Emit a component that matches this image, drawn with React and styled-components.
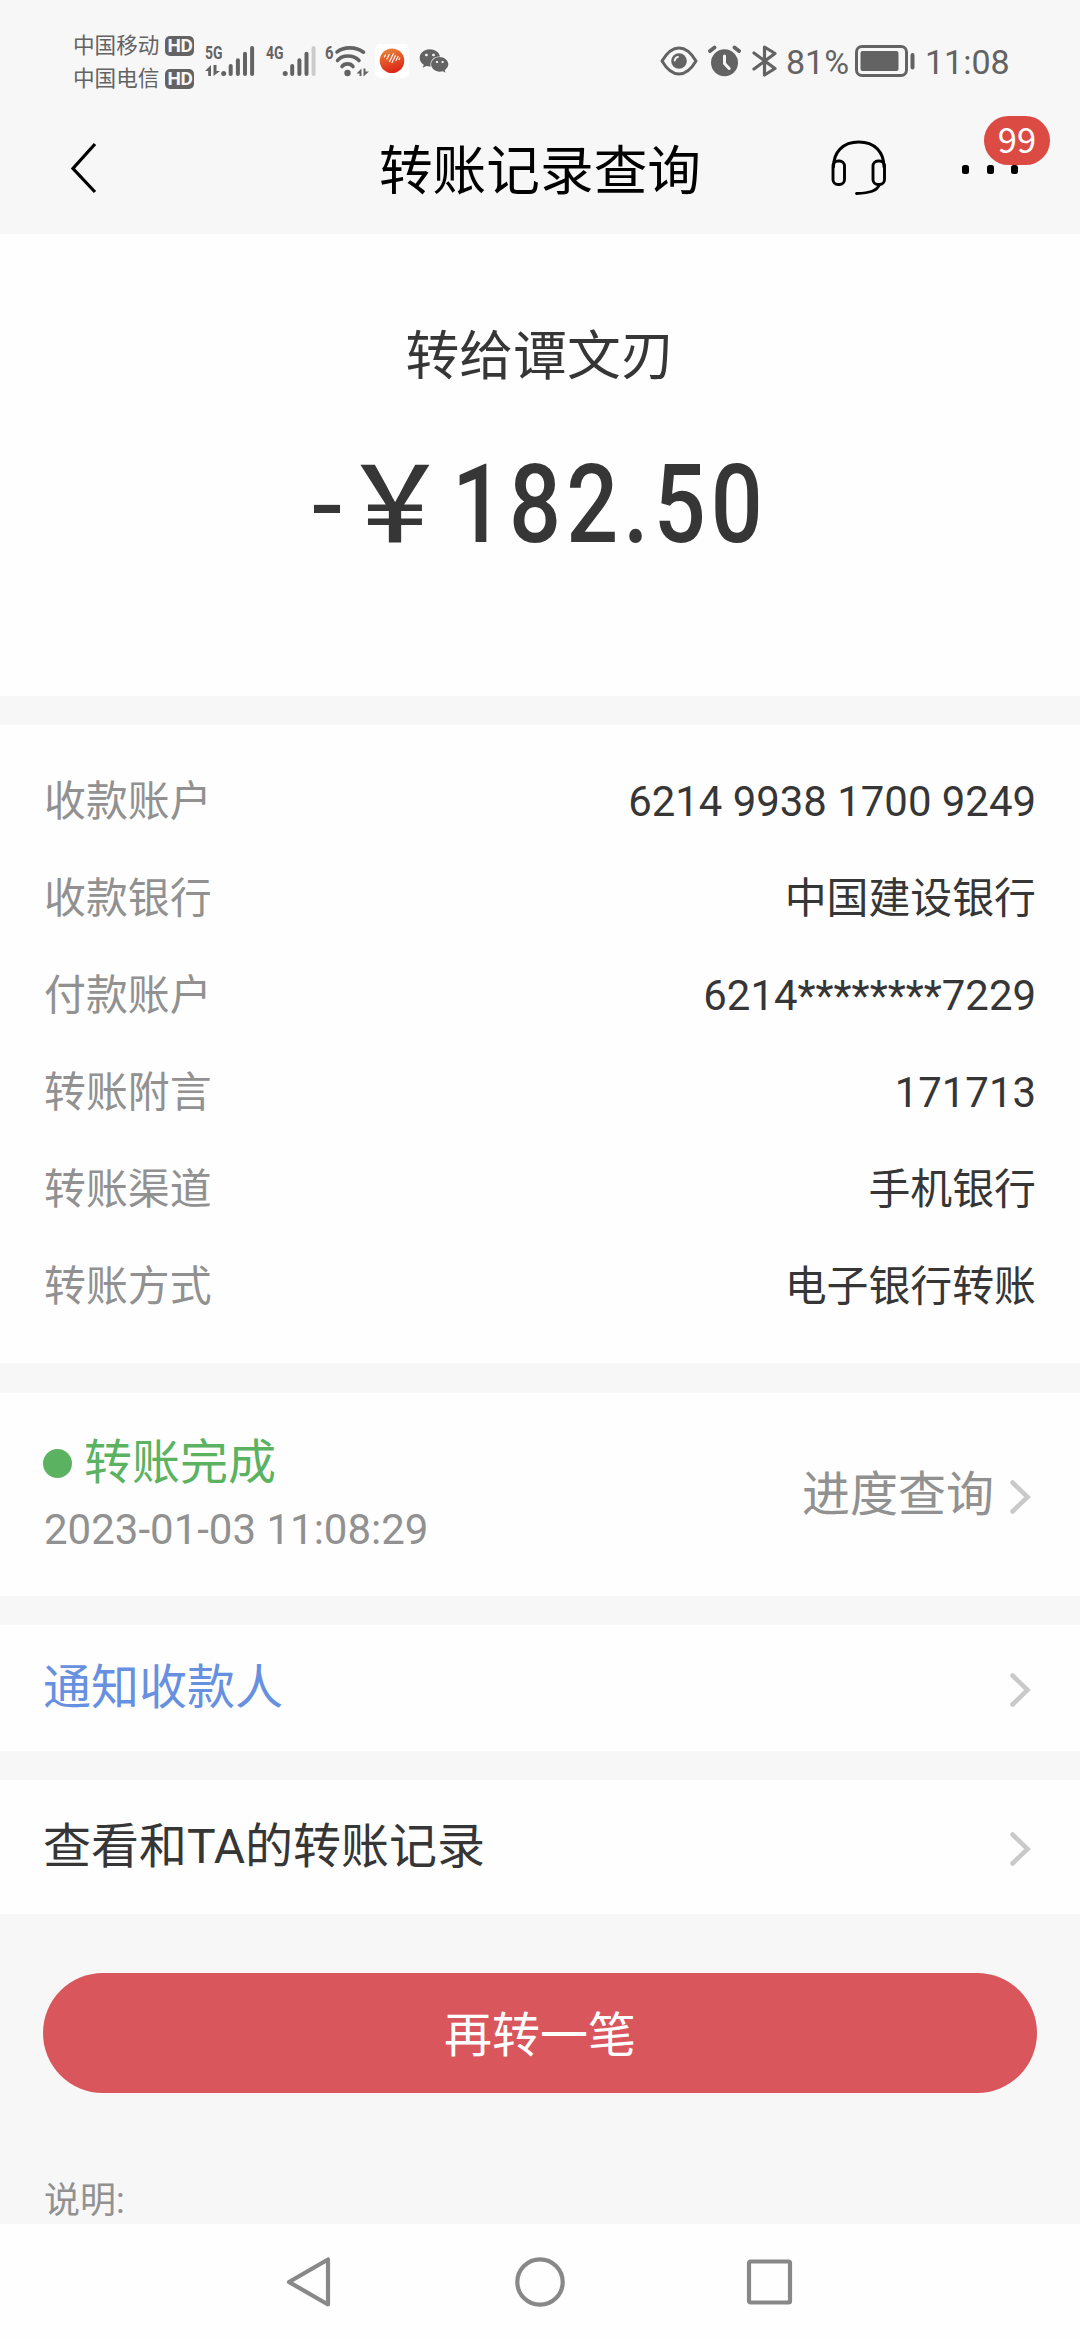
import React from 'react';
import styled, { createGlobalStyle } from 'styled-components';
import { FaWeixin } from 'react-icons/fa';

const GlobalStyle = createGlobalStyle`
  *, *::before, *::after { box-sizing: border-box; }
  html, body { margin: 0; padding: 0; background: #f7f7f7; }
  body { font-family: Roboto, 'Noto Sans CJK SC', sans-serif; color: #363636; }
  svg { display: block; flex: none; }
`;

const Screen = styled.div`
  width: 1080px;
  height: 2340px;
  display: flex;
  flex-direction: column;
  background: #f7f7f7;
  overflow: hidden;
`;

/* Status bar */
const StatusBar = styled.div`
  flex: none;
  height: 108px;
  padding: 29px 72px 0 73px;
  display: flex;
  align-items: flex-start;
  justify-content: space-between;
  color: #636363;
`;
const StatusGroup = styled.div`
  display: flex;
  align-items: flex-start;
`;
const Carriers = styled.div`
  width: 132px;
  display: flex;
  flex-direction: column;
`;
const Carrier = styled.div`
  height: 33px;
  display: flex;
  align-items: center;
  gap: 6px;
  font-size: 21.6px;
  line-height: 33px;
  white-space: nowrap;
`;
const HdTag = styled.span`
  width: 29px;
  height: 20px;
  border-radius: 5px;
  background: #636363;
  color: #f7f7f7;
  font-size: 19px;
  font-weight: 700;
  letter-spacing: -0.6px;
  line-height: 20.5px;
  text-align: center;
`;
const IconSlot = styled.div`
  margin-left: ${(p) => p.$left || 0}px;
  margin-top: ${(p) => p.$top || 0}px;
`;
const StatusText = styled.span`
  margin-left: ${(p) => p.$left}px;
  width: ${(p) => p.$width}px;
  font-size: 34px;
  line-height: 40px;
  margin-top: 13px;
  white-space: nowrap;
`;

/* Title bar */
const TitleBar = styled.div`
  flex: none;
  height: 126px;
  padding: 0 61px 0 71px;
  display: grid;
  grid-template-columns: 250px 1fr 250px;
  align-items: start;
`;
const BackSlot = styled.div`
  padding-top: 34px;
`;
const Title = styled.h1`
  margin: 0;
  padding-top: 25px;
  padding-right: 10px;
  font-size: 53.7px;
  line-height: 78px;
  font-weight: 400;
  color: #000;
  text-align: center;
  white-space: nowrap;
`;
const Actions = styled.div`
  padding-top: 32px;
  padding-left: 62px;
  display: flex;
  gap: 75px;
`;
const More = styled.div`
  position: relative;
  width: 56px;
  height: 56px;
  display: flex;
  align-items: center;
  justify-content: space-between;
  padding-top: 3px;
`;
const MoreDot = styled.i`
  width: 7px;
  height: 9px;
  border-radius: 2.5px;
  background: #000;
`;
const Badge = styled.span`
  position: absolute;
  left: 22px;
  top: -24px;
  width: 66px;
  height: 49px;
  border-radius: 24.5px;
  background: #dc4a44;
  color: #fff;
  font-family: 'Noto Sans CJK SC', sans-serif;
  font-size: 34.5px;
  line-height: 44px;
  text-align: center;
`;

/* Sections */
const Section = styled.section`
  height: ${(p) => p.$height}px;
  margin-bottom: ${(p) => p.$gap || 0}px;
  background: #fefefe;
  flex: none;
`;
const Summary = styled(Section)`
  display: flex;
  flex-direction: column;
  align-items: center;
  padding-top: 84px;
`;
const Payee = styled.div`
  font-size: 53.8px;
  line-height: 78px;
`;
const Amount = styled.div`
  width: 456px;
  margin-top: 37px;
  display: flex;
  align-items: baseline;
  font-size: 109px;
  line-height: 126px;
  font-weight: 500;
  white-space: nowrap;
`;
const Minus = styled.span`
  width: 30px;
  font-weight: 400;
`;
const Yen = styled.span`
  width: 110px;
  font-family: 'Noto Sans CJK SC', sans-serif;
  font-size: 106px;
`;
const Digits = styled.span`
  width: 306px;
  letter-spacing: 6px;
  transform: scaleX(0.84);
  transform-origin: left;
`;
const Details = styled(Section)`
  padding: 28px 44px 0;
`;
const DetailRow = styled.div`
  height: 97px;
  display: flex;
  align-items: center;
  justify-content: space-between;
  font-size: 41.9px;
  line-height: 60px;
  white-space: nowrap;
`;
const Label = styled.span`
  color: #919191;
`;
const Value = styled.span`
  color: #363636;
`;
const Progress = styled(Section)`
  display: flex;
  justify-content: space-between;
  padding: 36px 49px 0 43px;
`;
const State = styled.div`
  display: flex;
  align-items: center;
  gap: 12px;
  font-size: 48px;
  line-height: 68px;
  color: #5bb362;
`;
const StateDot = styled.i`
  width: 29px;
  height: 29px;
  border-radius: 50%;
  background: #5bb362;
`;
const Time = styled.div`
  margin-top: 2px;
  padding-left: 1px;
  font-size: 42px;
  line-height: 62px;
  color: #919191;
`;
const ProgressLink = styled.div`
  height: 136px;
  display: flex;
  align-items: center;
  gap: 15px;
  color: #919191;
  font-size: 48px;
  line-height: 68px;
`;
const ProgressLabel = styled.span`
  padding-bottom: 4px;
`;
const LinkRow = styled(Section)`
  display: flex;
  align-items: center;
  justify-content: space-between;
  padding: 0 49px 0 43px;
  color: ${(p) => p.$color};
  font-size: 48px;
  line-height: 68px;

  svg { margin-top: 3px; }
`;

/* Footer */
const ButtonArea = styled.div`
  flex: none;
  height: 310px;
  padding: 59px 43px 0;
`;
const AgainButton = styled.button`
  display: block;
  width: 100%;
  height: 120px;
  padding: 6px 0 0;
  border: 0;
  border-radius: 60px;
  background: #d8565c;
  color: #fff;
  font-family: inherit;
  font-size: 48px;
  line-height: 114px;
`;
const Note = styled.p`
  margin: 85px 0 0 1px;
  font-size: 36px;
  line-height: 46px;
  color: #919191;
`;
const NavBar = styled.nav`
  flex: none;
  height: 116px;
  background: #fefefe;
  display: flex;
  justify-content: center;
  gap: 180px;
  padding: 33px 0 0;
`;

const Bars = ({ label, faintLast, arrows, offset }) => (
  <svg width="52" height="40" viewBox="-1 -6 52 40" fill="#636363">
    <text x="0" y="15" fontFamily="Roboto, sans-serif" fontSize="18.500" fontWeight="700" textLength="17.500" lengthAdjust="spacingAndGlyphs">{label}</text>
    {arrows && <path d="M0 27l6-6v11H3.200v-5zM8.500 21h3v6h3.500l-6.500 5z" />}
    <g transform={`translate(${offset} 0)`}>
      <circle cx="0" cy="29.500" r="2.500" />
      <rect x="5" y="20" width="4" height="12" rx="2" />
      <rect x="12.200" y="14.300" width="4" height="17.700" rx="2" />
      <rect x="19.300" y="7.700" width="4" height="24.300" rx="2" />
      <rect x="26.400" y="2" width="4" height="30" rx="2" fill={faintLast ? '#cbcbcb' : '#636363'} />
    </g>
  </svg>
);

const Wifi = () => (
  <svg width="46" height="40" viewBox="-1 -6 46 40" fill="none" stroke="#636363" strokeWidth="3.600" strokeLinecap="round">
    <text x="0" y="14.500" fontFamily="Roboto, sans-serif" fontSize="18" fontWeight="700" textLength="8.500" lengthAdjust="spacingAndGlyphs" fill="#636363" stroke="none">6</text>
    <path d="M12 8C18.500 2.500 31 2.500 38.500 8.200" />
    <path d="M12.500 16.500C17 10.500 28.500 10.500 34 16.500" />
    <path d="M17 22.500C19.500 19 25.500 19 28 22.500" />
    <circle cx="22.500" cy="29" r="3.200" fill="#636363" stroke="none" />
    <path d="M31.500 29.500l5-5v7.500h-2v-2.500zM38.500 24.500h2v3h3.500l-5.500 5z" fill="#636363" stroke="none" />
  </svg>
);

const AppLogo = () => (
  <svg width="34" height="34" viewBox="0 0 34 34">
    <defs>
      <linearGradient id="ball" x1="0" y1="0" x2="0.300" y2="1">
        <stop offset="0" stopColor="#ea8a3c" />
        <stop offset="1" stopColor="#dc2a18" />
      </linearGradient>
    </defs>
    <rect width="34" height="34" rx="5" fill="#fff" />
    <circle cx="17" cy="16.700" r="12.300" fill="url(#ball)" />
    <path d="M9.500 12.800l1-1.800M12 15l2.200-4.500M14.500 17.500l4-8M17 18.500l3.500-7M21 16.500l2-4M24 15.500l.8-1.500" stroke="#fff" strokeOpacity="0.900" strokeWidth="1.300" strokeLinecap="round" />
  </svg>
);

const Eye = () => (
  <svg width="38" height="30" viewBox="0 0 38 30" fill="none" stroke="#636363" strokeWidth="3">
    <path d="M2 15C7 6.500 12.500 2 19 2s12 4.500 17 13c-5 8.500-10.500 13-17 13S7 23.500 2 15z" strokeLinejoin="round" />
    <circle cx="19" cy="15" r="7.800" fill="#636363" stroke="none" />
    <path d="M14.700 14.500c.3-2 1.500-3.200 3.300-3.600" stroke="#f7f7f7" strokeWidth="1.800" strokeLinecap="round" />
  </svg>
);

const Alarm = () => (
  <svg width="33" height="32" viewBox="0 0 33 32" fill="none" strokeLinecap="round">
    <circle cx="16.500" cy="17.700" r="13.500" fill="#636363" />
    <path d="M2 6l4.500-3.500M31 6l-4.500-3.500" stroke="#636363" strokeWidth="3.800" />
    <path d="M16.500 11v7.500l4.700 5" stroke="#f7f7f7" strokeWidth="3" strokeLinejoin="round" />
  </svg>
);

const Bluetooth = () => (
  <svg width="26" height="34" viewBox="0 0 26 34" fill="none" stroke="#636363" strokeWidth="3.200" strokeLinejoin="round" strokeLinecap="round">
    <path d="M2 9l21 15.500L12.500 31V3L23 9.500 2 25" />
  </svg>
);

const Battery = () => (
  <svg width="60" height="32" viewBox="0 0 60 32">
    <rect x="1.500" y="1.500" width="50" height="29" rx="5.500" fill="none" stroke="#636363" strokeWidth="3" />
    <rect x="5.500" y="6" width="38" height="20" rx="2" fill="#636363" />
    <rect x="55.500" y="8" width="4" height="16.500" rx="2" fill="#636363" />
  </svg>
);

const Headset = () => (
  <svg width="56" height="56" viewBox="0 0 56 56" fill="none" stroke="#000" strokeWidth="2.900" strokeLinecap="round">
    <path d="M2.500 27C2.500 12 12 2 27.800 2S53 12 53 27" />
    <rect x="2" y="21" width="11.500" height="23.500" rx="5" />
    <rect x="42" y="21" width="11.500" height="23.500" rx="5" />
    <path d="M48.500 44.500C46 51 39 53 25.500 53.500" />
  </svg>
);

const Chevron = () => (
  <svg width="22" height="34" viewBox="0 0 22 34" fill="none" stroke="#c9c9c9" strokeWidth="4.600" strokeLinecap="round" strokeLinejoin="miter">
    <path d="M3.500 2.500L18.500 17 3.500 31.500" />
  </svg>
);

const details = [
  ['收款账户', '6214 9938 1700 9249'],
  ['收款银行', '中国建设银行'],
  ['付款账户', '6214********7229'],
  ['转账附言', '171713'],
  ['转账渠道', '手机银行'],
  ['转账方式', '电子银行转账'],
];

export default function App() {
  return (
    <>
      <GlobalStyle />
      <Screen>
        <StatusBar>
          <StatusGroup>
            <Carriers>
              <Carrier>中国移动<HdTag>HD</HdTag></Carrier>
              <Carrier>中国电信<HdTag>HD</HdTag></Carrier>
            </Carriers>
            <IconSlot $left={-1} $top={9}><Bars label="5G" arrows offset={18.7} /></IconSlot>
            <IconSlot $left={8.500} $top={9}><Bars label="4G" faintLast offset={19.2} /></IconSlot>
            <IconSlot $left={7.500} $top={9}><Wifi /></IconSlot>
            <IconSlot $left={5} $top={15}><AppLogo /></IconSlot>
            <IconSlot $left={10} $top={17}><FaWeixin size={30} color="#636363" /></IconSlot>
          </StatusGroup>
          <StatusGroup>
            <IconSlot $top={17}><Eye /></IconSlot>
            <IconSlot $left={10.500} $top={16}><Alarm /></IconSlot>
            <IconSlot $left={11} $top={15}><Bluetooth /></IconSlot>
            <StatusText $left={8} $width={69}>81%</StatusText>
            <IconSlot $top={16}><Battery /></IconSlot>
            <StatusText $left={10} $width={83}>11:08</StatusText>
          </StatusGroup>
        </StatusBar>

        <TitleBar>
          <BackSlot>
            <svg width="26" height="52" viewBox="0 0 26 52" fill="none" stroke="#000" strokeWidth="3.200">
              <path d="M24 2L2 26.500 24 50" />
            </svg>
          </BackSlot>
          <Title>转账记录查询</Title>
          <Actions>
            <Headset />
            <More>
              <MoreDot /><MoreDot /><MoreDot />
              <Badge>99</Badge>
            </More>
          </Actions>
        </TitleBar>

        <Summary $height={462} $gap={29}>
          <Payee>转给谭文刃</Payee>
          <Amount>
            <Minus>-</Minus>
            <Yen>￥</Yen>
            <Digits>182.50</Digits>
          </Amount>
        </Summary>

        <Details $height={638} $gap={30}>
          {details.map(([label, value]) => (
            <DetailRow key={label}>
              <Label>{label}</Label>
              <Value>{value}</Value>
            </DetailRow>
          ))}
        </Details>

        <Progress $height={203} $gap={29}>
          <div>
            <State><StateDot />转账完成</State>
            <Time>2023-01-03 11:08:29</Time>
          </div>
          <ProgressLink><ProgressLabel>进度查询</ProgressLabel><Chevron /></ProgressLink>
        </Progress>

        <LinkRow $height={126} $gap={29} $color="#6790e0">
          通知收款人<Chevron />
        </LinkRow>
        <LinkRow $height={134} $color="#363636">
          查看和TA的转账记录<Chevron />
        </LinkRow>

        <ButtonArea>
          <AgainButton>再转一笔</AgainButton>
          <Note>说明:</Note>
        </ButtonArea>

        <NavBar>
          <svg width="50" height="50" viewBox="0 0 50 50" fill="none" stroke="#888" strokeWidth="4.200" strokeLinejoin="round">
            <path d="M43 2.500V47.500L4 25z" />
          </svg>
          <svg width="50" height="50" viewBox="0 0 50 50" fill="none" stroke="#888" strokeWidth="4.200">
            <circle cx="25" cy="25" r="22.700" />
          </svg>
          <svg width="50" height="50" viewBox="0 0 50 50" fill="none" stroke="#888" strokeWidth="4.200">
            <rect x="4" y="4.500" width="41" height="41" rx="1.500" />
          </svg>
        </NavBar>
      </Screen>
    </>
  );
}
